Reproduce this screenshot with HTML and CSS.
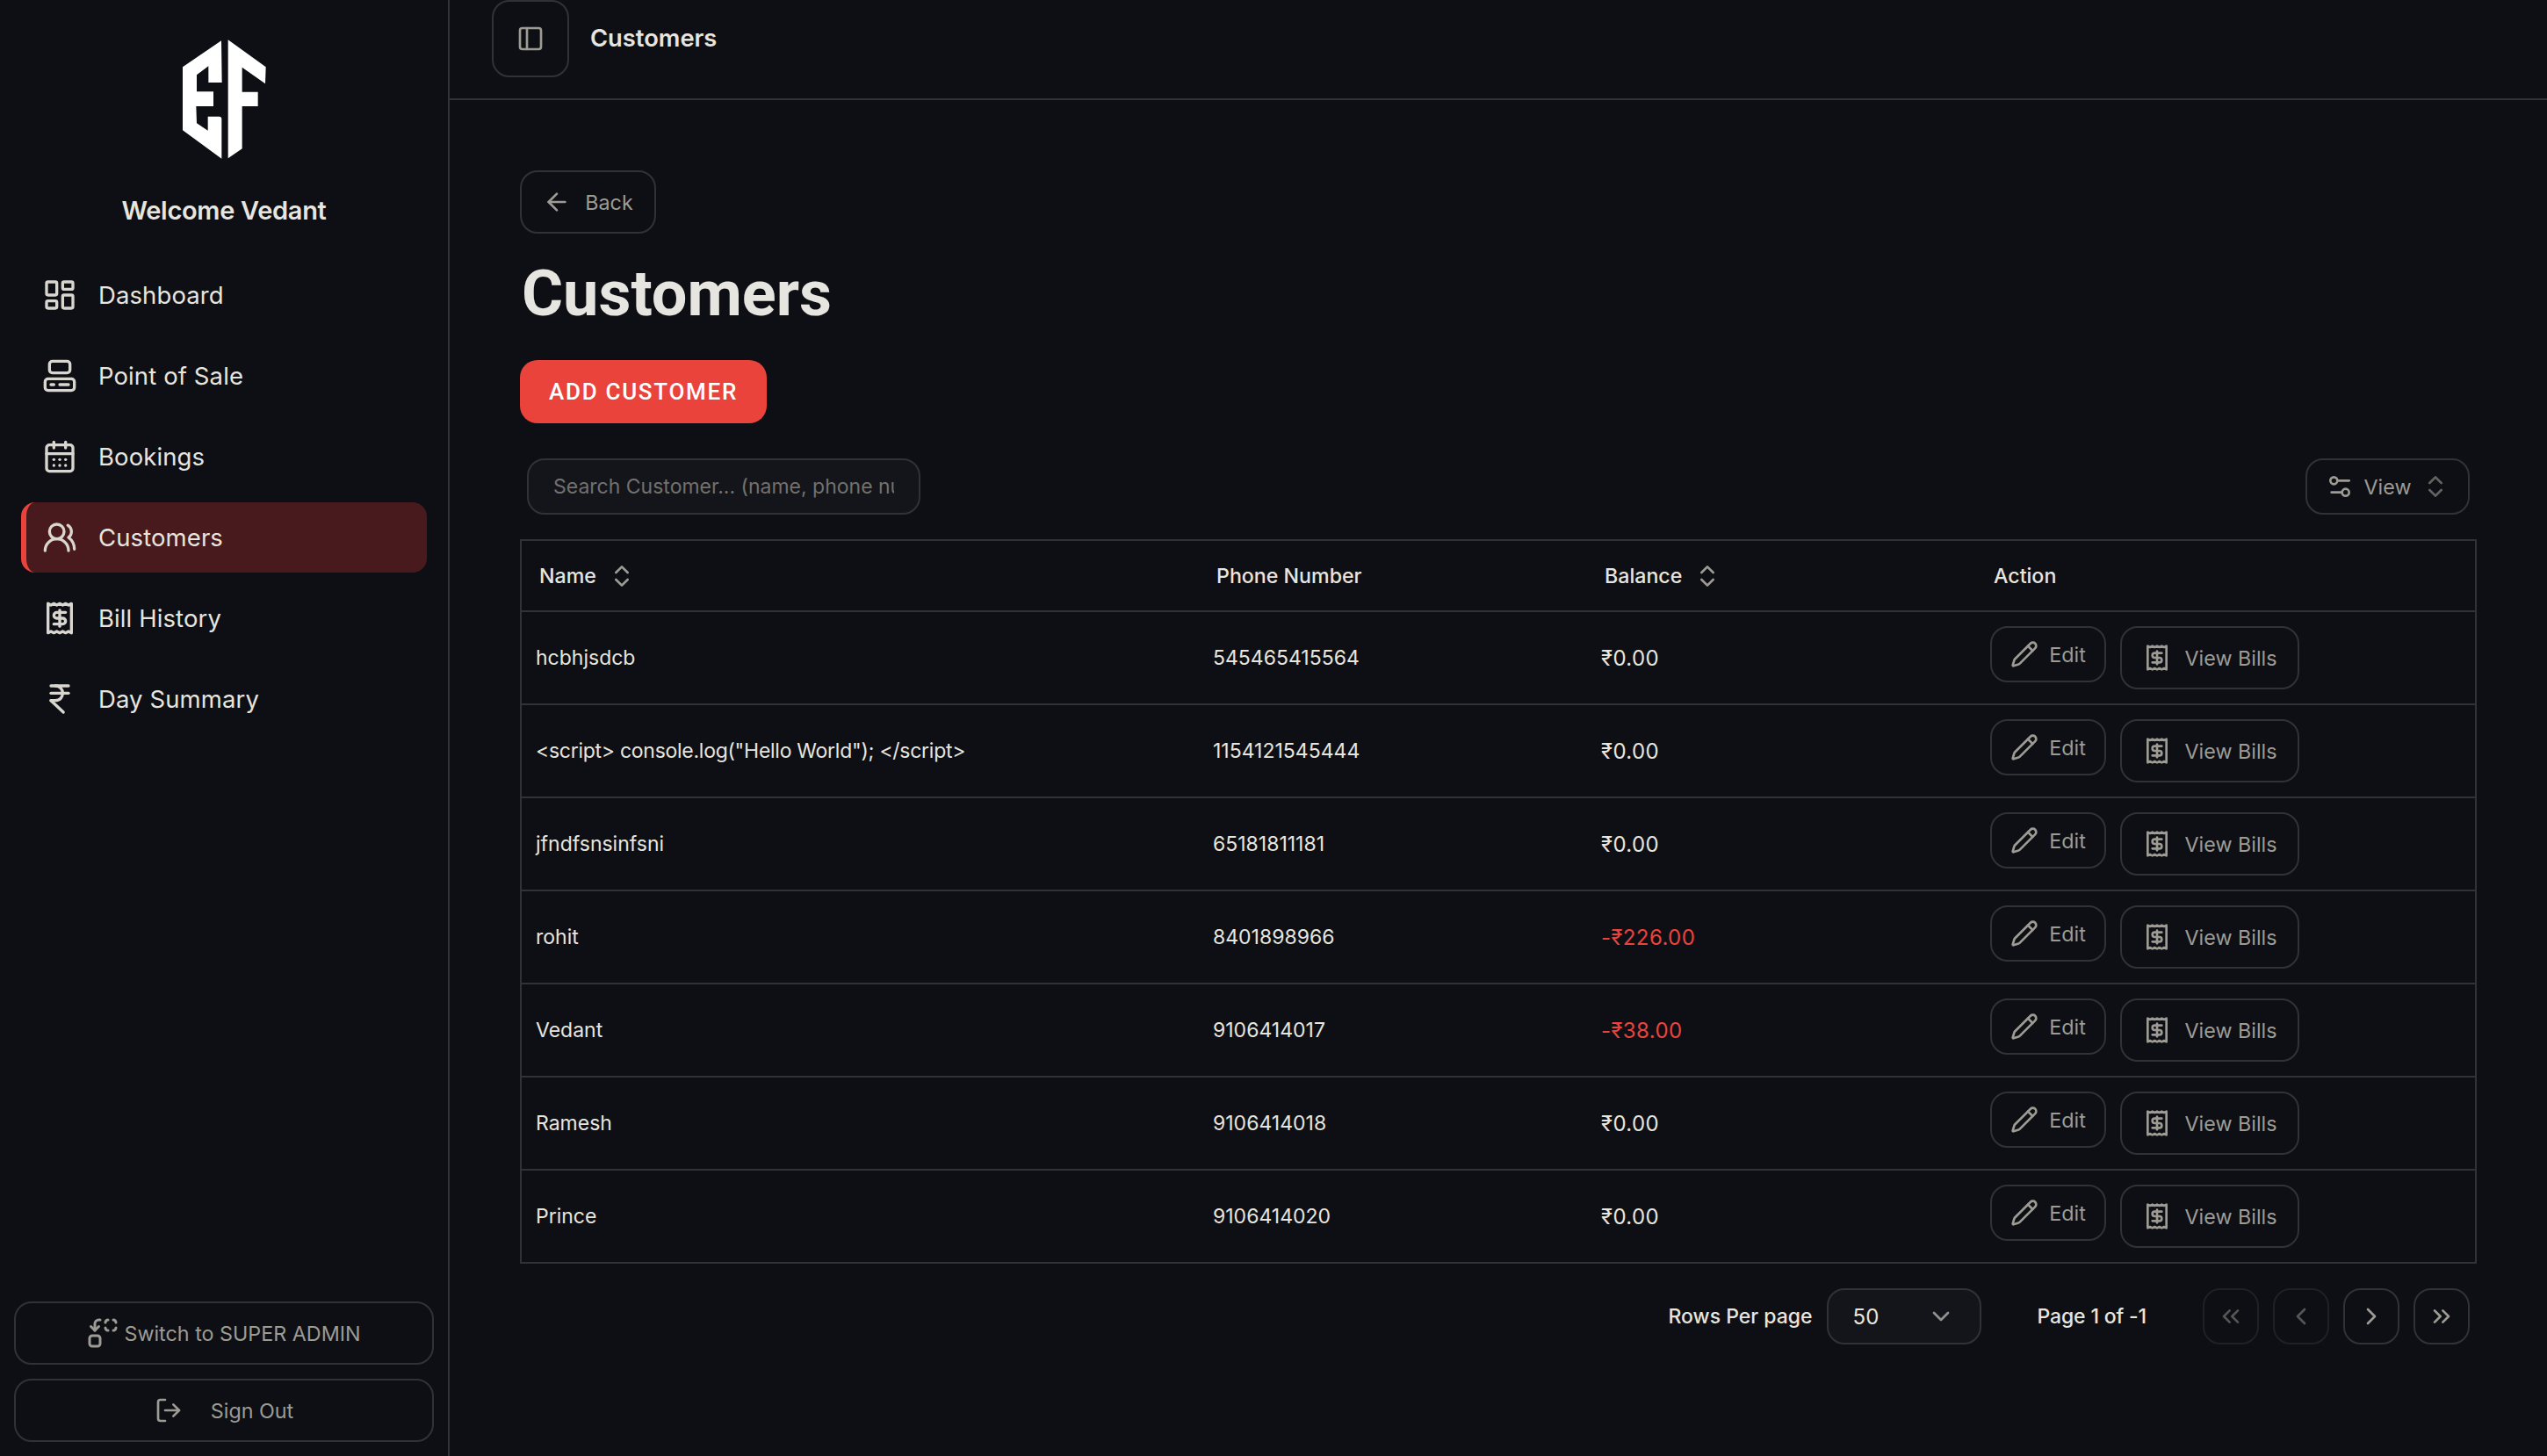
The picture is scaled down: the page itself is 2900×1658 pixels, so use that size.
FILE: index.html
```html
<!DOCTYPE html>
<html lang="en">
<head>
    <meta charset="UTF-8">
    <meta name="viewport" content="width=device-width, initial-scale=1.0">
    <title>Customers</title>
    <link rel="stylesheet" href="styles.css">
</head>
<body>
    <!-- Icon set -->
    <svg class="sprite">
        <symbol id="pencil" viewBox="0 0 24 24"><path d="M21.174 6.812a1 1 0 0 0-3.986-3.987L3.842 16.174a2 2 0 0 0-.5.83l-1.321 4.352a.5.5 0 0 0 .623.622l4.353-1.32a2 2 0 0 0 .83-.497z"/><path d="m15 5 4 4"/></symbol>
        <symbol id="receipt" viewBox="0 0 24 24"><path d="M4 2v20l2-1 2 1 2-1 2 1 2-1 2 1 2-1 2 1V2l-2 1-2-1-2 1-2-1-2 1-2-1-2 1Z"/><path d="M16 8h-6a2 2 0 1 0 0 4h4a2 2 0 1 1 0 4H8"/><path d="M12 17.5v-11"/></symbol>
        <symbol id="sort" viewBox="0 0 24 24"><path d="m7 15 5 5 5-5"/><path d="m7 9 5-5 5 5"/></symbol>
    </svg>

    <div class="layout">
        <aside class="sidebar">
            <svg class="logo" viewBox="0 0 288 408">
                <path d="M135 4 3 94V310L136 407V271Q136 263 127 263H89V311L51 286 49 228H108V178H51V121L91 91V147H137Z"/>
                <path d="M158 1V406L206 373V228H260V179H206V95L285 151 287 94Z"/>
            </svg>
            <p class="welcome">Welcome Vedant</p>
            <nav class="nav">
                <a class="nav-item">
                    <svg class="icon" viewBox="0 0 24 24"><rect width="7" height="9" x="3" y="3" rx="1"/><rect width="7" height="5" x="14" y="3" rx="1"/><rect width="7" height="9" x="14" y="12" rx="1"/><rect width="7" height="5" x="3" y="16" rx="1"/></svg>
                    <span>Dashboard</span>
                </a>
                <a class="nav-item">
                    <svg class="icon" viewBox="0 0 24 24"><rect width="14" height="8" x="5" y="2" rx="2"/><rect width="20" height="8" x="2" y="14" rx="2"/><path d="M6 18h2"/><path d="M12 18h6"/></svg>
                    <span>Point of Sale</span>
                </a>
                <a class="nav-item">
                    <svg class="icon" viewBox="0 0 24 24"><path d="M8 2v4"/><path d="M16 2v4"/><rect width="18" height="18" x="3" y="4" rx="2"/><path d="M3 10h18"/><path d="M8 14h.01"/><path d="M12 14h.01"/><path d="M16 14h.01"/><path d="M8 18h.01"/><path d="M12 18h.01"/><path d="M16 18h.01"/></svg>
                    <span>Bookings</span>
                </a>
                <a class="nav-item active">
                    <svg class="icon" viewBox="0 0 24 24"><path d="M18 21a8 8 0 0 0-16 0"/><circle cx="10" cy="8" r="5"/><path d="M22 20c0-3.37-2-6.5-4-8a5 5 0 0 0-.45-8.3"/></svg>
                    <span>Customers</span>
                </a>
                <a class="nav-item">
                    <svg class="icon"><use href="#receipt"/></svg>
                    <span>Bill History</span>
                </a>
                <a class="nav-item">
                    <svg class="icon" viewBox="0 0 24 24"><path d="M6 3h12"/><path d="M6 8h12"/><path d="m6 13 8.5 8"/><path d="M6 13h3"/><path d="M9 13c6.667 0 6.667-10 0-10"/></svg>
                    <span>Day Summary</span>
                </a>
            </nav>
            <div class="sidebar-footer">
                <button class="btn switch">
                    <svg class="icon" viewBox="0 0 24 24"><path d="M14 4a2 2 0 0 1 2-2"/><path d="M16 10a2 2 0 0 1-2-2"/><path d="M20 2a2 2 0 0 1 2 2"/><path d="M22 8a2 2 0 0 1-2 2"/><path d="m3 7 3 3 3-3"/><path d="M6 10V5a3 3 0 0 1 3-3h1"/><rect width="8" height="8" x="2" y="14" rx="2"/></svg>
                    <span>Switch to SUPER ADMIN</span>
                </button>
                <button class="btn signout">
                    <svg class="icon" viewBox="0 0 24 24"><path d="M9 21H5a2 2 0 0 1-2-2V5a2 2 0 0 1 2-2h4"/><path d="m16 17 5-5-5-5"/><path d="M21 12H9"/></svg>
                    <span>Sign Out</span>
                </button>
            </div>
        </aside>

        <div class="page">
            <header class="topbar">
                <button class="btn toggle">
                    <svg class="icon" viewBox="0 0 24 24"><rect width="18" height="18" x="3" y="3" rx="2"/><path d="M9 3v18"/></svg>
                </button>
                <span class="topbar-title">Customers</span>
            </header>

            <main class="content">
                <button class="btn back">
                    <svg class="icon" viewBox="0 0 24 24"><path d="m12 19-7-7 7-7"/><path d="M19 12H5"/></svg>
                    <span>Back</span>
                </button>
                <h1>Customers</h1>
                <button class="add-btn">ADD CUSTOMER</button>

                <div class="toolbar">
                    <input class="search" type="text" placeholder="Search Customer... (name, phone number)">
                    <button class="btn view">
                        <svg class="icon" viewBox="0 0 24 24"><path d="M20 7h-9"/><path d="M14 17H5"/><circle cx="17" cy="17" r="3"/><circle cx="7" cy="7" r="3"/></svg>
                        <span>View</span>
                        <svg class="icon faded"><use href="#sort"/></svg>
                    </button>
                </div>

                <table class="customers">
                    <colgroup>
                        <col class="col-name">
                        <col class="col-phone">
                        <col class="col-balance">
                        <col class="col-action">
                    </colgroup>
                    <thead>
                        <tr>
                            <th><div class="head">Name <svg class="icon"><use href="#sort"/></svg></div></th>
                            <th><div class="head">Phone Number</div></th>
                            <th><div class="head">Balance <svg class="icon"><use href="#sort"/></svg></div></th>
                            <th><div class="head">Action</div></th>
                        </tr>
                    </thead>
                    <tbody>
                        <tr>
                            <td>hcbhjsdcb</td>
                            <td>545465415564</td>
                            <td class="balance">₹0.00</td>
                            <td><div class="actions"><button class="btn edit"><svg class="icon"><use href="#pencil"/></svg><span>Edit</span></button><button class="btn bills"><svg class="icon"><use href="#receipt"/></svg><span>View Bills</span></button></div></td>
                        </tr>
                        <tr>
                            <td class="long-name">&lt;script&gt; console.log("Hello World"); &lt;/script&gt;</td>
                            <td>1154121545444</td>
                            <td class="balance">₹0.00</td>
                            <td><div class="actions"><button class="btn edit"><svg class="icon"><use href="#pencil"/></svg><span>Edit</span></button><button class="btn bills"><svg class="icon"><use href="#receipt"/></svg><span>View Bills</span></button></div></td>
                        </tr>
                        <tr>
                            <td>jfndfsnsinfsni</td>
                            <td>65181811181</td>
                            <td class="balance">₹0.00</td>
                            <td><div class="actions"><button class="btn edit"><svg class="icon"><use href="#pencil"/></svg><span>Edit</span></button><button class="btn bills"><svg class="icon"><use href="#receipt"/></svg><span>View Bills</span></button></div></td>
                        </tr>
                        <tr>
                            <td>rohit</td>
                            <td>8401898966</td>
                            <td class="balance due">-₹226.00</td>
                            <td><div class="actions"><button class="btn edit"><svg class="icon"><use href="#pencil"/></svg><span>Edit</span></button><button class="btn bills"><svg class="icon"><use href="#receipt"/></svg><span>View Bills</span></button></div></td>
                        </tr>
                        <tr>
                            <td>Vedant</td>
                            <td>9106414017</td>
                            <td class="balance due">-₹38.00</td>
                            <td><div class="actions"><button class="btn edit"><svg class="icon"><use href="#pencil"/></svg><span>Edit</span></button><button class="btn bills"><svg class="icon"><use href="#receipt"/></svg><span>View Bills</span></button></div></td>
                        </tr>
                        <tr>
                            <td>Ramesh</td>
                            <td>9106414018</td>
                            <td class="balance">₹0.00</td>
                            <td><div class="actions"><button class="btn edit"><svg class="icon"><use href="#pencil"/></svg><span>Edit</span></button><button class="btn bills"><svg class="icon"><use href="#receipt"/></svg><span>View Bills</span></button></div></td>
                        </tr>
                        <tr>
                            <td>Prince</td>
                            <td>9106414020</td>
                            <td class="balance">₹0.00</td>
                            <td><div class="actions"><button class="btn edit"><svg class="icon"><use href="#pencil"/></svg><span>Edit</span></button><button class="btn bills"><svg class="icon"><use href="#receipt"/></svg><span>View Bills</span></button></div></td>
                        </tr>
                    </tbody>
                </table>

                <div class="pager">
                    <span class="rows-label">Rows Per page</span>
                    <div class="select">
                        <span>50</span>
                        <svg class="icon faded" viewBox="0 0 24 24"><path d="m6 9 6 6 6-6"/></svg>
                    </div>
                    <span class="page-label">Page 1 of -1</span>
                    <div class="pager-buttons">
                        <button class="btn square" disabled><svg class="icon" viewBox="0 0 24 24"><path d="m11 17-5-5 5-5"/><path d="m18 17-5-5 5-5"/></svg></button>
                        <button class="btn square" disabled><svg class="icon" viewBox="0 0 24 24"><path d="m15 18-6-6 6-6"/></svg></button>
                        <button class="btn square"><svg class="icon" viewBox="0 0 24 24"><path d="m9 18 6-6-6-6"/></svg></button>
                        <button class="btn square"><svg class="icon" viewBox="0 0 24 24"><path d="m6 17 5-5-5-5"/><path d="m13 17 5-5-5-5"/></svg></button>
                    </div>
                </div>
            </main>
        </div>
    </div>
</body>
</html>
```
FILE: styles.css
```css
* {
    box-sizing: border-box;
}
body {
    font-family: 'Inter', 'Open Sans', sans-serif;
    font-size: 24px;
    background-color: #0e0f14;
    color: #e7e5df;
    margin: 0;
}
button {
    font-family: inherit;
    margin: 0;
}
.sprite {
    display: none;
}
.icon {
    width: 32px;
    height: 32px;
    flex-shrink: 0;
    fill: none;
    stroke: currentColor;
    stroke-width: 2;
    stroke-linecap: round;
    stroke-linejoin: round;
}
.layout {
    display: flex;
    height: 1658px;
    overflow: hidden;
}

/* Sidebar */
.sidebar {
    width: 512px;
    flex-shrink: 0;
    display: flex;
    flex-direction: column;
    align-items: center;
    padding: 45px 16px 16px;
    border-right: 2px solid #313236;
}
.logo {
    width: 96px;
    height: 136px;
    fill: #fff;
}
.welcome {
    margin: 39px 0 0;
    font-size: 29px;
    font-weight: 600;
    line-height: 40px;
    letter-spacing: -0.3px;
}
.nav {
    width: 462px;
    margin-top: 36px;
    display: flex;
    flex-direction: column;
    gap: 12px;
}
.nav-item {
    display: flex;
    align-items: center;
    gap: 24px;
    height: 80px;
    padding-left: 18px;
    border-left: 6px solid transparent;
    border-radius: 16px;
    font-size: 27.5px;
    letter-spacing: 0.1px;
}
.nav-item .icon {
    width: 40px;
    height: 40px;
    color: #d9d6d0;
}
.nav-item.active {
    background: #481a1e;
    border-left-color: #ea433c;
}
.sidebar-footer {
    width: 100%;
    margin-top: auto;
    display: flex;
    flex-direction: column;
    gap: 16px;
}

/* Buttons */
.btn {
    display: flex;
    align-items: center;
    justify-content: center;
    height: 72px;
    padding: 0;
    background: none;
    border: 2px solid #313236;
    border-radius: 20px;
    color: #9d9b93;
    font-size: 23.3px;
    font-weight: 400;
}
.switch {
    gap: 6px;
}
.switch .icon {
    width: 36px;
    height: 36px;
}
.signout {
    gap: 32px;
}

/* Top bar */
.page {
    flex: 1;
    min-width: 0;
}
.topbar {
    display: flex;
    align-items: flex-start;
    gap: 24px;
    height: 114px;
    padding-left: 48px;
    border-bottom: 2px solid #313236;
}
.toggle {
    width: 88px;
    height: 88px;
}
.topbar-title {
    font-size: 27.3px;
    font-weight: 600;
    line-height: 88px;
}

/* Content */
.content {
    padding: 80px;
}
.back {
    width: 155px;
    gap: 16px;
}
h1 {
    font-family: 'Roboto', sans-serif;
    font-size: 72px;
    font-weight: 700;
    line-height: 80px;
    margin: 29px 0 35px 2px;
}
.add-btn {
    display: block;
    width: 281px;
    height: 72px;
    padding: 0;
    border: 0;
    border-radius: 20px;
    background: #ea433c;
    color: #fff;
    font-family: 'Roboto', sans-serif;
    font-size: 26px;
    font-weight: 500;
    letter-spacing: 1.7px;
}
.toolbar {
    display: flex;
    justify-content: space-between;
    margin: 40px 8px 28px;
}
.search {
    width: 448px;
    height: 64px;
    padding: 0 28px;
    background: #14151a;
    border: 2px solid #313236;
    border-radius: 20px;
    color: #e7e5df;
    font-family: inherit;
    font-size: 23px;
}
.search::placeholder {
    color: #72716e;
}
.view {
    width: 187px;
    height: 64px;
    gap: 12px;
}
.faded {
    opacity: 0.6;
}

/* Table */
.customers {
    width: 100%;
    table-layout: fixed;
    border-collapse: separate;
    border-spacing: 0;
    border: 2px solid #313236;
}
.col-name {
    width: 771px;
}
.col-phone {
    width: 442px;
}
.col-balance {
    width: 443px;
}
.customers th {
    height: 81px;
    padding: 0 20px;
    border-bottom: 2px solid #313236;
    font-size: 23.2px;
    font-weight: 500;
    text-align: left;
}
.head {
    display: flex;
    align-items: center;
    gap: 13px;
}
.head .icon {
    color: #9d9b93;
}
.customers td {
    height: 106px;
    padding: 0 16px;
    border-bottom: 2px solid #313236;
    font-size: 23px;
}
.customers tr:last-child td {
    height: 104px;
    border-bottom: 0;
}
.customers .long-name {
    letter-spacing: -0.27px;
}
.customers .balance {
    font-size: 24px;
    letter-spacing: 0.4px;
}
.customers .due {
    color: #ea433c;
}
.actions {
    display: flex;
    align-items: flex-start;
    gap: 16px;
}
.edit {
    width: 132px;
    height: 64px;
    gap: 12px;
}
.bills {
    width: 204px;
    gap: 16px;
}

/* Pagination */
.pager {
    display: flex;
    align-items: center;
    justify-content: flex-end;
    margin: 28px 8px 0;
    font-size: 23px;
    font-weight: 500;
}
.select {
    display: flex;
    align-items: center;
    justify-content: space-between;
    width: 176px;
    height: 64px;
    margin: 0 64px 0 16px;
    padding: 0 28px;
    background: #14151a;
    border: 2px solid #313236;
    border-radius: 20px;
    font-size: 24px;
    font-weight: 400;
}
.page-label {
    letter-spacing: -0.15px;
}
.pager-buttons {
    display: flex;
    gap: 16px;
    margin-left: 64px;
}
.square {
    width: 64px;
    height: 64px;
}
.square:disabled {
    opacity: 0.5;
}
```
